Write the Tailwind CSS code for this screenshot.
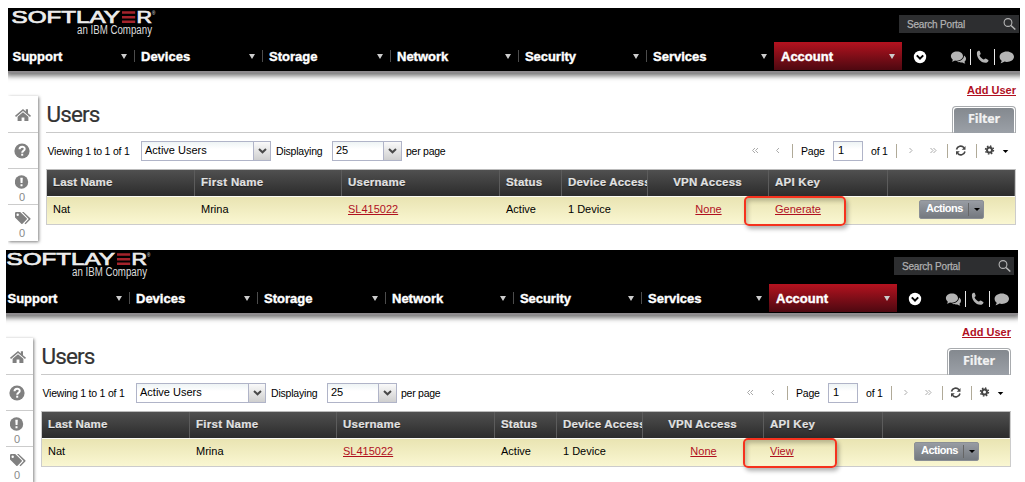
<!DOCTYPE html>
<html lang="en">
<head>
<meta charset="utf-8">
<title>SoftLayer Users</title>
<script src="https://cdn.jsdelivr.net/npm/@tailwindcss/browser@4"></script>
</head>
<body class="bg-white font-['Liberation_Sans',Arial,sans-serif] text-[11px] text-black w-[1025px] h-[482px] overflow-hidden pt-[8px]">

<div id="first" class="ml-[8px] w-[1012px] h-[242px] overflow-hidden"></div>
<div id="second" class="ml-[6px] w-[1012px] h-[232px] overflow-hidden"></div>

<template id="portal">
<div class="portal relative w-[1015px] h-[242px] flex flex-col">
  <header class="h-[63px] shrink-0 bg-black shadow-[0_2px_0_#8e8b8e,0_3px_5px_2px_rgba(0,0,0,0.55)] flex flex-col">
    <div class="flex justify-between h-[34px] w-[1012px]">
      <svg class="w-[150px] h-[34px] overflow-visible" viewBox="8 8 150 34" fill="#ececec" font-family="'Liberation Sans',Arial,sans-serif">
        <text x="11.5" y="22.900" font-size="16.500" textLength="108.500" lengthAdjust="spacingAndGlyphs" stroke="#ececec" stroke-width=".7">SOFTLAY</text>
        <path d="M122 11.200h13.200v2.600h-13.200zM122 15.900h13.200v2.600h-13.200zM122 20.500h13.200v2.600h-13.200z" fill="#a5232b"/>
        <text x="136.5" y="22.900" font-size="16.500" textLength="15.500" lengthAdjust="spacingAndGlyphs" stroke="#ececec" stroke-width=".7">R</text>
        <text x="152" y="14.500" font-size="4.500">®</text>
        <text x="77" y="34.200" font-size="12" textLength="75" lengthAdjust="spacingAndGlyphs" fill="#dcdcdc">an IBM Company</text>
      </svg>
      <div class="mt-[7px] mr-[1px] w-[120px] h-[18px] bg-[#2d2e30] flex items-center justify-between pl-[8px] pr-[3px] text-[#b0b0b0] text-[10px]">
        <span class="tracking-[-0.2px] [-webkit-text-stroke:0.25px_#b0b0b0]">Search Portal</span>
        <svg width="13" height="13" viewBox="0 0 13 13" fill="none" stroke="#b5b5b5"><circle cx="5" cy="4.500" r="3.900" stroke-width="1.100"/><path d="M8 7.500l4.300 4" stroke-width="1.600"/></svg>
      </div>
    </div>
    <nav class="flex h-[28px] text-[13px] font-bold text-white [-webkit-text-stroke:0.4px_white]">
      <a class="flex items-center justify-between w-[126px] pl-[4.500px] pr-[7px]"><span class="pt-[2px]">Support</span><i class="border-x-[3.5px] border-x-transparent border-t-[5px] border-t-[#ccc]"></i></a>
      <a class="flex items-center w-[128px] pr-[7px]"><b class="w-px h-[12px] bg-[#4c4c4c] mr-[6px]"></b><span class="grow pt-[2px]">Devices</span><i class="border-x-[3.5px] border-x-transparent border-t-[5px] border-t-[#ccc]"></i></a>
      <a class="flex items-center w-[128px] pr-[7px]"><b class="w-px h-[12px] bg-[#4c4c4c] mr-[6px]"></b><span class="grow pt-[2px]">Storage</span><i class="border-x-[3.5px] border-x-transparent border-t-[5px] border-t-[#ccc]"></i></a>
      <a class="flex items-center w-[128px] pr-[7px]"><b class="w-px h-[12px] bg-[#4c4c4c] mr-[6px]"></b><span class="grow pt-[2px]">Network</span><i class="border-x-[3.5px] border-x-transparent border-t-[5px] border-t-[#ccc]"></i></a>
      <a class="flex items-center w-[128px] pr-[7px]"><b class="w-px h-[12px] bg-[#4c4c4c] mr-[6px]"></b><span class="grow pt-[2px] tracking-[-0.050px]">Security</span><i class="border-x-[3.5px] border-x-transparent border-t-[5px] border-t-[#ccc]"></i></a>
      <a class="flex items-center w-[128px] pr-[7px]"><b class="w-px h-[12px] bg-[#4c4c4c] mr-[6px]"></b><span class="grow pt-[2px]">Services</span><i class="border-x-[3.5px] border-x-transparent border-t-[5px] border-t-[#ccc]"></i></a>
      <a class="flex items-center w-[128px] pl-[7px] pr-[7px] bg-linear-to-b from-[#b5121f] to-[#4e0810]"><span class="grow pt-[2px]">Account</span><i class="border-x-[3.5px] border-x-transparent border-t-[5px] border-t-[#ccc]"></i></a>
      <svg class="w-[116px] h-[28px]" viewBox="902 42 116 28">
        <circle cx="920" cy="57" r="6.200" fill="#fff"/><path d="M916.8 55.4l3.2 3.2 3.2-3.2" fill="none" stroke="#000" stroke-width="2"/>
        <path d="M957 51.5c3.4 0 6 2 6 4.6s-2.600 4.600-6 4.600c-.7 0-1.400-.1-2-.2-.9.7-2 1.100-3.200 1.200.6-.6.9-1.200 1-2-1.200-.9-1.900-2.100-1.900-3.600 0-2.600 2.700-4.600 6.100-4.600z" fill="#b4b4b4"/>
        <path d="M964 55.500c1.300.8 2 1.900 2 3.300 0 1.200-.6 2.200-1.500 2.900.1.800.4 1.300.9 1.800-1.200-.1-2.200-.5-3-1.100-2.100.3-4.200-.1-5.600-1.100 4 0 7.200-2.300 7.200-5.800z" fill="#b4b4b4"/>
        <path d="M970.500 49v16M994.500 49v16" stroke="#e8e8e8" stroke-width="1"/>
        <path d="M977 52.200c.3-1 1.600-1.600 2.400-1.400.6.700 1.100 2 1.300 3 0 .8-1.200 1.100-1.100 1.700.7 1.700 2.200 3.200 4 4.100.7.100 1.100-1.100 1.800-1.100 1.100.3 2.300 1 3 1.600.3.900-.5 2.100-1.400 2.500-5.400 1.400-11-5-10-10.400z" fill="#b4b4b4"/>
        <path d="M1006.800 51.500c4 0 7.200 2.300 7.200 5.200s-3.200 5.200-7.200 5.200c-.8 0-1.600-.1-2.300-.3-1 .9-2.500 1.500-4 1.600.7-.7 1.100-1.500 1.200-2.500-1.300-1-2.100-2.400-2.100-4 0-2.900 3.200-5.200 7.200-5.200z" fill="#b4b4b4"/>
      </svg>
    </nav>
  </header>

  <div class="flex pt-[25px] h-[179px]">
    <aside class="w-[30px] h-[145px] shrink-0 bg-white shadow-[1px_1px_3px_rgba(0,0,0,0.5)] flex flex-col text-[11px] text-[#777]">
      <div class="h-[37px] border-b border-[#ccc] flex items-center justify-center pr-[1px] pt-[2px]">
        <svg width="16" height="14" viewBox="0 0 16 14" fill="#808080"><path d="M8 1L0 7.800l1 1.100L8 3l7 5.900 1-1.100-3-2.500V1.200h-2.200v2.200z"/><path d="M8 4.200L2.600 8.700V13h4V9.500h2.800V13h4V8.700z"/></svg>
      </div>
      <div class="h-[36px] border-b border-[#ccc] flex items-center justify-center pr-[2px]">
        <svg width="16" height="16" viewBox="0 0 16 16"><circle cx="8" cy="8" r="7.600" fill="#808080"/><path d="M5.500 6.200c.2-3.300 5.200-3.200 5.200-.3 0 1.800-2.500 1.900-2.500 3.800" fill="none" stroke="#fff" stroke-width="2"/><path d="M7.200 10.700h2v2h-2z" fill="#fff"/></svg>
      </div>
      <div class="h-[36px] border-b border-[#ccc] flex flex-col items-center pt-[6px] pr-[2px] leading-[14px]">
        <svg class="shrink-0" width="14" height="14" viewBox="0 0 14 14"><circle cx="6.500" cy="7" r="6.700" fill="#808080"/><path d="M5.300 2.700h2.500l-.3 5.300h-1.900zM5.500 9.200h2v2h-2z" fill="#fff"/></svg>
        <span class="pt-[1px] text-[#888]">0</span>
      </div>
      <div class="h-[36px] flex flex-col items-center pt-[6px] pr-[1px] leading-[14px]">
        <svg class="shrink-0" width="18" height="14" viewBox="0 0 18 14" fill="#808080"><path fill-rule="evenodd" d="M1 2.200Q1 1 2.200 1h4l6.500 6.200q.5.600 0 1.200l-4.200 4.400q-.6.500-1.200 0L1 6.500zM3.700 2.500a1.200 1.200 0 100 2.400 1.200 1.200 0 000-2.400z"/><path d="M8 1h1.600l6.700 6.300q.6.600 0 1.200l-4.700 4.700-1.100-.8 4.200-4.400z"/></svg>
        <span class="pt-[1px] pr-[1px] text-[#888]">0</span>
      </div>
    </aside>

    <main class="ml-[8px] w-[970px] -mt-[15px]">
      <div class="flex justify-end h-[16px] items-center pt-[2px] font-bold text-[#b0101f] underline"><a>Add User</a></div>
      <div class="flex justify-between h-[36px] border-b border-[#c9c9c9]">
        <h1 class="font-[Roboto,sans-serif] text-[22.500px] leading-[35px] tracking-[-0.9px] text-[#333] pl-[0.500px] [-webkit-text-stroke:0.2px_#333]">Users</h1>
        <div class="mt-[9px] w-[64px] h-[27px] rounded-t-[4px] border border-b-0 border-[#a8abae] p-[1px] pb-0"><div class="h-full rounded-t-[3px] bg-linear-to-b from-[#84898f] to-[#9ba0a7] text-[#f2f2f2] font-['Open_Sans',sans-serif] font-bold text-[12.500px] tracking-[-0.200px] leading-[22px] text-center [-webkit-text-stroke:0.2px_#f2f2f2]">Filter</div></div>
      </div>
      <div class="flex items-center h-[36px] text-[10.500px]">
        <span class="w-[95px] pl-[1.500px] pt-[2px] tracking-[-0.220px] whitespace-nowrap">Viewing 1 to 1 of 1</span>
        <div class="flex w-[130px] h-[20px] border border-[#b0b4c8] text-[11px]"><span class="grow pl-[3px] leading-[16px] bg-linear-to-b from-[#eef4f5] to-white to-40%">Active Users</span><span class="w-[17px] border-l border-[#b0b4c8] bg-linear-to-b from-[#fafafa] to-[#cfcfcf] flex items-center justify-center"><svg width="9" height="6" viewBox="0 0 9 6"><path d="M1 1l3.500 3.300L8 1" fill="none" stroke="#484848" stroke-width="2"/></svg></span></div>
        <span class="w-[61px] pl-[5px] pt-[1px] tracking-[-0.200px]">Displaying</span>
        <div class="flex w-[70px] h-[20px] border border-[#b0b4c8] text-[11px]"><span class="grow pl-[3px] leading-[16px] bg-linear-to-b from-[#eef4f5] to-white to-40%">25</span><span class="w-[18px] border-l border-[#b0b4c8] bg-linear-to-b from-[#fafafa] to-[#cfcfcf] flex items-center justify-center"><svg width="9" height="6" viewBox="0 0 9 6"><path d="M1 1l3.500 3.300L8 1" fill="none" stroke="#484848" stroke-width="2"/></svg></span></div>
        <span class="pl-[4px] pt-[1px] grow tracking-[-0.250px]">per page</span>
        <svg class="w-[50px] h-[20px]" viewBox="750 141 50 20" fill="none" stroke="#aaa"><path d="M755 148l-2.500 2.500 2.500 2.500M758 148l-2.500 2.500 2.500 2.500M779 148l-2.500 2.500 2.500 2.500"/><path d="M792.500 144v14" stroke="#b0aa98"/></svg>
        <span class="w-[33px] pl-[1px] pt-[1px] tracking-[-0.200px]">Page</span>
        <span class="w-[30px] h-[20px] border border-[#b0b4c8] text-[11px] pl-[4px] leading-[16px] bg-linear-to-b from-[#eef4f5] to-white to-40%">1</span>
        <span class="w-[27px] pl-[8px] pt-[1px] tracking-[-0.200px] whitespace-nowrap">of 1</span>
        <svg class="w-[126px] h-[20px]" viewBox="890 141 126 20" fill="none" stroke="#aaa"><path d="M909.500 148l2.500 2.500-2.500 2.500M930.500 148l2.500 2.500-2.500 2.500M933.500 148l2.500 2.500-2.500 2.500"/><path d="M896.500 144v14M947.500 144v14M976.500 144v14" stroke="#b0aa98"/>
          <path d="M956.500 149.500a4.300 4.300 0 017.500-1.800M965 151.500a4.300 4.300 0 01-7.500 1.800" stroke="#444" stroke-width="1.600"/><path d="M965.500 146v3.800h-3.800zM956 155v-3.800h3.800z" fill="#444" stroke="none"/>
          <circle cx="989.500" cy="150" r="2.500" stroke="#444" stroke-width="2"/><circle cx="989.500" cy="150" r="4" stroke="#444" stroke-width="1.400" stroke-dasharray="1.570 1.570"/><path d="M1002.800 150h5.500l-2.750 3z" fill="#000" stroke="none"/></svg>
      </div>
      <div class="border border-[#ccc] border-t-[#bbb] h-[56px] overflow-hidden">
        <div class="flex h-[26px] leading-[25px] font-bold text-[11.500px] text-[#e2e2e2] bg-linear-to-b from-[#505050] to-[#2c2c2c] [text-shadow:0_1px_1px_rgba(0,0,0,0.5)] [-webkit-text-stroke:0.200px_#e2e2e2] whitespace-nowrap">
          <span class="w-[148px] pl-[6px] border-r border-[#5c5c5c] tracking-[0.150px]">Last Name</span>
          <span class="w-[147px] pl-[6px] border-r border-[#5c5c5c] tracking-[0.300px]">First Name</span>
          <span class="w-[158px] pl-[6px] border-r border-[#5c5c5c] tracking-[0.250px]">Username</span>
          <span class="w-[62px] pl-[6px] border-r border-[#5c5c5c] tracking-[0.200px]">Status</span>
          <span class="w-[86px] pl-[6px] border-r border-[#5c5c5c] overflow-hidden tracking-[0.200px]">Device Access</span>
          <span class="w-[121px] border-r border-[#5c5c5c] text-center pr-[1px] tracking-[0.200px]">VPN Access</span>
          <span class="w-[119px] pl-[6px] border-r border-[#5c5c5c] tracking-[0.250px]">API Key</span>
          <span class="grow border-r border-[#5c5c5c]"></span>
        </div>
        <div class="flex h-[28px] leading-[25px] border-t border-[#fbfbf3] bg-linear-to-b from-[#e9e4b2] to-[#faf7d2]">
          <span class="w-[148px] pl-[6px]">Nat</span>
          <span class="w-[147px] pl-[6px]">Mrina</span>
          <span class="w-[158px] pl-[6px]"><a class="text-[#b0101f] underline">SL415022</a></span>
          <span class="w-[62px] pl-[6px]">Active</span>
          <span class="w-[86px] pl-[6px]">1 Device</span>
          <span class="w-[121px] text-center"><a class="text-[#b0101f] underline">None</a></span>
          <span class="w-[119px] pl-[6px]"><a class="apikey text-[#b0101f] underline"></a></span>
          <span class="grow flex items-start pl-[31px] pt-[3px]"><span class="flex w-[65px] h-[19px] bg-linear-to-b from-[#989ca3] to-[#74797f] border border-[#8b8f95] rounded-[2px] text-white font-bold leading-[15px] text-[11px]"><span class="pl-[6px] w-[48px] tracking-[-0.500px]">Actions</span><i class="w-px h-[13px] mt-[2px] bg-[#c9ccd0] border-l border-[#666]"></i><i class="ml-[4.500px] mt-[7px] size-0 border-x-[3px] border-x-transparent border-t-[3px] border-t-black"></i></span></span>
        </div>
      </div>
    </main>
  </div>
  <div class="callout absolute top-[188px] h-[30px] border-2 border-[#f5321e] rounded-[5px] shadow-[2px_3px_4px_rgba(0,0,0,0.3),inset_2px_3px_4px_rgba(0,0,0,0.22)]"></div>
</div>
</template>

<script>
  const tpl = document.getElementById('portal');
  const add = (id, label, box, shift) => {
    const node = tpl.content.cloneNode(true);
    node.querySelector('.apikey').textContent = label;
    node.querySelector('.callout').classList.add(...box);
    if (shift) node.querySelector('.portal').classList.add(shift);
    document.getElementById(id).append(node);
  };
  add('first', 'Generate', ['left-[736px]', 'w-[102px]'], '');
  add('second', 'View', ['left-[740px]', 'w-[94px]'], '-ml-[3px]');
</script>
</body>
</html>
